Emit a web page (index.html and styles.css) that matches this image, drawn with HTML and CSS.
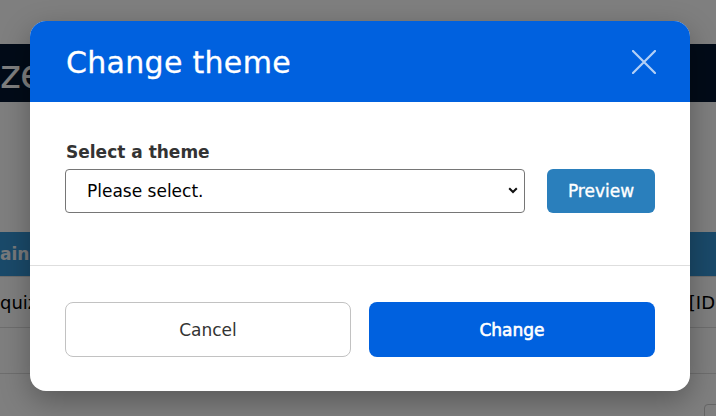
FILE: index.html
```html
<!DOCTYPE html>
<html lang="en">
<head>
<meta charset="utf-8">
<title>Change theme</title>
<link rel="stylesheet" href="styles.css">
</head>
<body>
<div class="page">
  <div class="topgap"></div>
  <div class="navbar"><span class="brand">ze</span></div>
  <div class="midgap"></div>
  <div class="thead"><span class="th">ain</span></div>
  <div class="trow"><span class="td">quiz</span><span class="td td-right">[ID</span></div>
  <div class="trow2"></div>
  <div class="pager"><span class="pagebox"></span></div>
</div>

<div class="overlay">
  <div class="modal">
    <div class="modal-header">
      <h1 class="modal-title">Change theme</h1>
      <button class="close" aria-label="Close">
        <svg width="24" height="24" viewBox="0 0 24 24"><path d="M1 1 L23 23 M23 1 L1 23" stroke="currentColor" stroke-width="2.2" stroke-linecap="round" fill="none"/></svg>
      </button>
    </div>
    <div class="modal-body">
      <label class="label" for="theme">Select a theme</label>
      <div class="select-row">
        <div class="select-wrap">
          <select id="theme" class="select"><option>Please select.</option></select>
          <svg class="chev" width="10" height="7" viewBox="0 0 10 7"><path d="M1.2 1.2 L5 5 L8.8 1.2" stroke="#111" stroke-width="2" fill="none"/></svg>
        </div>
        <button class="btn-preview">Preview</button>
      </div>
    </div>
    <div class="modal-footer">
      <button class="btn btn-cancel">Cancel</button>
      <button class="btn btn-change">Change</button>
    </div>
  </div>
</div>
</body>
</html>
```

FILE: styles.css
```css
html, body {
  margin: 0;
  padding: 0;
}
body {
  width: 716px;
  height: 416px;
  overflow: hidden;
  background: #fff;
  font-family: "DejaVu Sans", Verdana, sans-serif;
  position: relative;
}
.page {
  display: flex;
  flex-direction: column;
}
.topgap { height: 44px; }
.navbar {
  height: 58px;
  background: #041730;
  display: flex;
  align-items: center;
  overflow: hidden;
}
.brand {
  color: #ffffff;
  font-size: 40px;
  line-height: 1;
  margin-top: 2px;
  letter-spacing: -1px;
}
.midgap { height: 130px; }
.thead {
  height: 44px;
  background: #3494d4;
  display: flex;
  align-items: center;
}
.th {
  color: #f0f4f8;
  font-weight: bold;
  font-size: 17px;
}
.trow {
  height: 52px;
  border-top: 1px solid #ddd;
  border-bottom: 1px solid #ddd;
  display: flex;
  align-items: center;
  justify-content: space-between;
  box-sizing: border-box;
}
.td {
  font-size: 18px;
  color: #000;
}
.td-right {
  margin-right: 1px;
}
.trow2 {
  height: 45px;
  border-bottom: 1px solid #ddd;
}
.pager {
  display: flex;
  justify-content: flex-end;
  padding-top: 30px;
}
.pagebox {
  width: 30px;
  height: 30px;
  border: 1px solid #ccc;
  border-radius: 4px;
  margin-right: -20px;
}

.overlay {
  position: absolute;
  inset: 0;
  background: rgba(0, 0, 0, 0.5);
  padding: 21px 0 0 30px;
  box-sizing: border-box;
}
.modal {
  width: 660px;
  height: 370px;
  background: #fff;
  border-radius: 16px;
  overflow: hidden;
  box-shadow: 0 10px 30px rgba(0, 0, 0, 0.3);
  display: flex;
  flex-direction: column;
}
.modal-header {
  height: 81px;
  background: #0061df;
  display: flex;
  align-items: center;
  justify-content: space-between;
  padding: 0 34px 0 36px;
  box-sizing: border-box;
}
.modal-title {
  margin: 0;
  font-weight: normal;
  font-size: 30px;
  color: #fff;
  letter-spacing: 0.3px;
  -webkit-text-stroke: 0.3px #fff;
  margin-top: 2px;
}
.close {
  background: none;
  border: 0;
  padding: 0;
  width: 24px;
  height: 24px;
  color: rgba(255, 255, 255, 0.7);
  display: flex;
}
.modal-body {
  padding: 40px 35px 0 35px;
  height: 164px;
  box-sizing: border-box;
  border-bottom: 1px solid #dedede;
}
.label {
  display: block;
  font-weight: bold;
  font-size: 17px;
  color: #333;
  margin-bottom: 7px;
  margin-left: 1px;
}
.select-row {
  display: flex;
  gap: 22px;
}
.select-wrap {
  position: relative;
  width: 460px;
  height: 44px;
}
.select {
  -webkit-appearance: none;
  appearance: none;
  width: 100%;
  height: 100%;
  border: 1px solid #767676;
  border-radius: 4px;
  background: #fff;
  font-family: inherit;
  font-size: 17px;
  color: #000;
  padding: 0 0 0 21px;
  box-sizing: border-box;
}
.chev {
  position: absolute;
  right: 7px;
  top: 18px;
}
.btn-preview {
  width: 108px;
  height: 44px;
  border: 0;
  border-radius: 6px;
  background: #2a7fbc;
  color: #fff;
  font-family: inherit;
  font-size: 17px;
  -webkit-text-stroke: 0.35px #fff;
  padding: 0;
}
.modal-footer {
  display: flex;
  gap: 18px;
  padding: 36px 35px 0 35px;
}
.btn {
  width: 286px;
  height: 55px;
  border-radius: 8px;
  font-family: inherit;
  font-size: 17px;
  box-sizing: border-box;
  padding: 0;
}
.btn-cancel {
  background: #fff;
  border: 1px solid #c2c2c2;
  color: #333;
}
.btn-change {
  background: #0061df;
  border: 0;
  color: #fff;
  -webkit-text-stroke: 0.6px #fff;
}
```
